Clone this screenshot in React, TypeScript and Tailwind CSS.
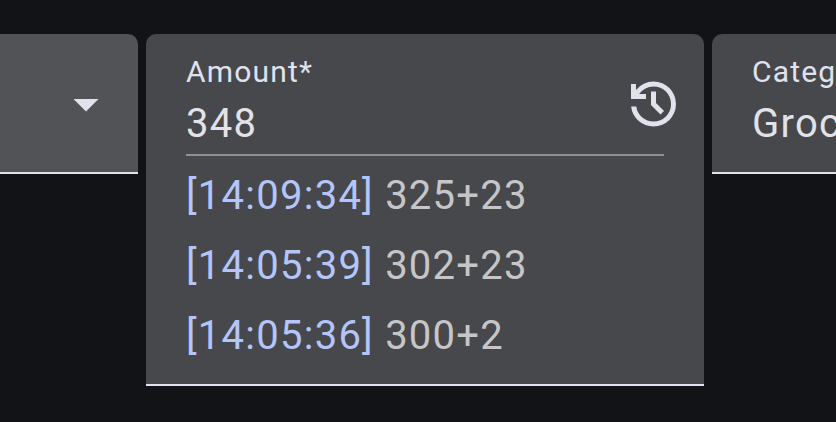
export default function App() {
  const history = [
    { time: "[14:09:34]", value: "325+23" },
    { time: "[14:05:39]", value: "302+23" },
    { time: "[14:05:36]", value: "300+2" },
  ];
  return (
    <div className="flex h-[422px] w-[836px] items-start gap-2 overflow-hidden bg-[#121316] pt-[34px] font-[Roboto,sans-serif] text-[#e3e2e6]">
      <div className="flex h-[140px] w-[138px] shrink-0 items-center justify-end rounded-tr-[10px] border-b-2 border-[#e3e2e6] bg-[#525357] pt-[5px] pr-[39px]">
        <svg width="26" height="13" viewBox="0 0 26 13" className="block"><path d="M.5 0h25L13 12.5z" fill="#e1e2ec" /></svg>
      </div>
      <div className="h-[352px] w-[558px] shrink-0 rounded-t-[10px] border-b-2 border-[#e1e2ec] bg-[#47484c] pl-10">
        <div className="flex h-[122px] w-[478px] items-start justify-between border-b-2 border-[#919194]">
          <div className="pt-[20px]">
            <div className="h-9 text-[30px] leading-9 tracking-[1.2px] text-[#e1e2ec]">Amount*</div>
            <div className="mt-[10px] h-12 text-[40px] leading-[48px] tracking-[1.25px]">348</div>
          </div>
          <svg width="60" height="60" viewBox="8 -960 960 960" className="mt-[40px] -mr-5 shrink-0" fill="#e1e2ec">
            <path d="M480-120q-138 0-240.5-91.5T122-440h82q14 104 92.5 172T480-200q117 0 198.5-81.5T760-480q0-117-81.5-198.5T480-760q-69 0-129 32t-101 88h110v80H120v-240h80v94q51-64 124.5-99T480-840q75 0 140.5 28.5t114 77q48.5 48.5 77 114T840-480q0 75-28.5 140.5t-77 114q-48.5 48.5-114 77T480-120Zm112-192L440-464v-216h80v184l128 128-56 56Z" />
          </svg>
        </div>
        <div className="pt-[5px] text-[40px] leading-[70px] tracking-[1.25px]">
          {history.map((h) => (
            <div key={h.time} className="h-[70px] whitespace-pre text-[#c7c6c6]">
              <span className="text-[#b3c5fb]">{h.time}</span> {h.value}
            </div>
          ))}
        </div>
      </div>
      <div className="h-[140px] w-[300px] shrink-0 rounded-tl-[10px] border-b-2 border-[#e3e2e6] bg-[#47484c] pt-[20px] pl-10">
        <div className="h-9 text-[30px] leading-9 tracking-[1.2px] text-[#e1e2ec]">Category*</div>
        <div className="mt-[10px] h-12 text-[40px] leading-[48px] tracking-[1.25px]">Groceries</div>
      </div>
    </div>
  );
}
